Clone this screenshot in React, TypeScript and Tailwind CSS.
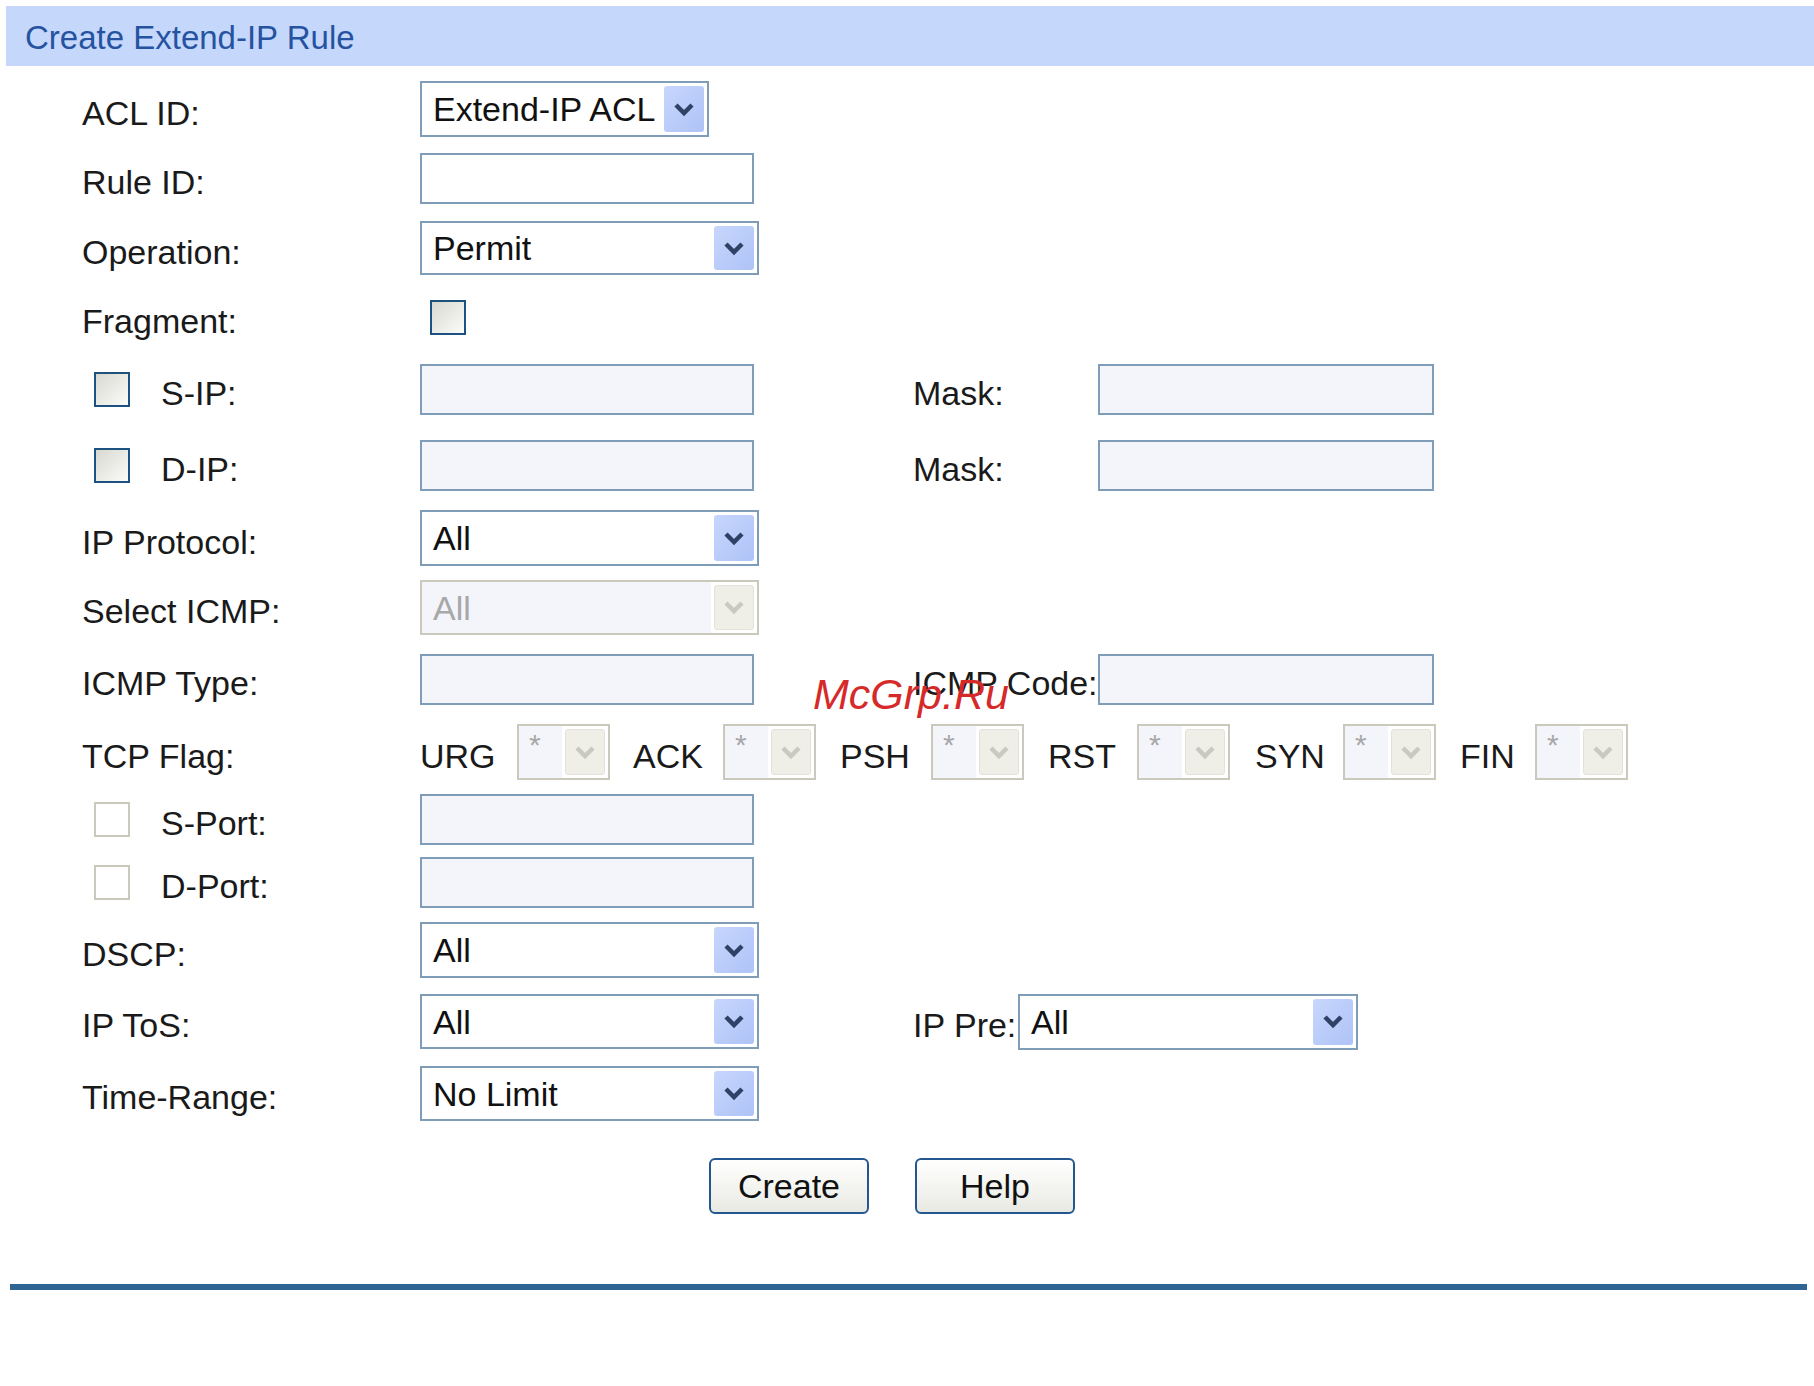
import React from "react";

const Chevron = ({ color }: { color: string }) => (
  <svg width="22" height="15" viewBox="0 0 22 15">
    <polyline points="3,3 11,11 19,3" fill="none" stroke={color} strokeWidth="4.5" strokeLinecap="butt" strokeLinejoin="miter" />
  </svg>
);

function Select({ w, h, value, disabled }: { w: string; h: string; value: string; disabled?: boolean }) {
  return (
    <div
      className={`${w} ${h} flex items-stretch border-2 ${
        disabled ? "border-[#cbc9bc] bg-[#f4f5fb]" : "border-[#7f9db9] bg-white"
      }`}
    >
      <div
        className={`flex-1 flex items-center pl-[11px] text-[34px] leading-none ${
          disabled ? "text-[#a8a8a8]" : "text-[#111111]"
        }`}
      >
        {value}
      </div>
      {disabled ? (
        <div className="flex p-[3px] pl-[3px] bg-white">
          <div className="w-[40px] rounded-[3px] bg-[#efeee7] border border-[#e4e2d8] flex items-center justify-center">
            <Chevron color="#c9c9c1" />
          </div>
        </div>
      ) : (
        <div className="flex p-[3px]">
          <div className="w-[40px] rounded-[3px] bg-gradient-to-br from-[#c7d6fc] to-[#aec3f7] flex items-center justify-center">
            <Chevron color="#2f4265" />
          </div>
        </div>
      )}
    </div>
  );
}

function Input({ w, h, light }: { w: string; h: string; light?: boolean }) {
  return <div className={`${w} ${h} border-2 border-[#7f9db9] ${light ? "bg-[#f3f5fb]" : "bg-white"}`} />;
}

function Checkbox({ disabled }: { disabled?: boolean }) {
  return disabled ? (
    <div className="w-[36px] h-[35px] border-2 border-[#cbc9bc] bg-white" />
  ) : (
    <div className="w-[36px] h-[35px] border-2 border-[#1c5180] bg-gradient-to-br from-[#d9d9d2] to-[#fbfbf9]" />
  );
}

function Label({ children }: { children: React.ReactNode }) {
  return <div className="w-[420px] pl-[82px] pt-[7px] text-[34px] leading-none text-[#1a1a1a]">{children}</div>;
}

function CbLabel({ children, disabled }: { children: React.ReactNode; disabled?: boolean }) {
  return (
    <div className="w-[420px] pl-[94px] flex items-center">
      <Checkbox disabled={disabled} />
      <span className="ml-[31px] pt-[7px] text-[34px] leading-none text-[#1a1a1a]">{children}</span>
    </div>
  );
}

function FlagSel() {
  return (
    <div className="w-[93px] h-[56px] border-2 border-[#cbc9bc] flex items-stretch bg-white">
      <div className="w-[43px] bg-[#f4f5fb] pl-[10px] pt-[4px] text-[30px] leading-none text-[#a8a8a8]">*</div>
      <div className="flex-1 flex p-[3px]">
        <div className="flex-1 rounded-[3px] bg-[#efeee7] border border-[#e4e2d8] flex items-center justify-center">
          <Chevron color="#c9c9c1" />
        </div>
      </div>
    </div>
  );
}

function Flag({ name, lw }: { name: string; lw: string }) {
  return (
    <div className="flex items-center">
      <span className={`${lw} pt-[7px] text-[34px] leading-none text-[#1a1a1a]`}>{name}</span>
      <FlagSel />
    </div>
  );
}

const SecondLabel = ({ children, w }: { children: React.ReactNode; w: string }) => (
  <div className={`${w} pt-[7px] text-[34px] leading-none text-[#1a1a1a]`}>{children}</div>
);

export default function App() {
  return (
    <div className="relative w-[1814px] h-[1386px] bg-white overflow-hidden font-['Liberation_Sans',Arial,sans-serif]">
      <div className="ml-[6px] mt-[6px] h-[60px] bg-[#c5d8fc] flex items-center pl-[19px] pt-[2px] text-[33px] leading-none text-[#2553a0]">
        Create Extend-IP Rule
      </div>

      <div className="mt-[8px] flex flex-col">
        <div className="h-[70px] flex items-center">
          <Label>ACL ID:</Label>
          <Select w="w-[289px]" h="h-[56px]" value="Extend-IP ACL" />
        </div>
        <div className="h-[69px] flex items-center">
          <Label>Rule ID:</Label>
          <Input w="w-[334px]" h="h-[51px]" />
        </div>
        <div className="h-[70px] flex items-center">
          <Label>Operation:</Label>
          <Select w="w-[339px]" h="h-[54px]" value="Permit" />
        </div>
        <div className="h-[69px] flex items-center">
          <Label>Fragment:</Label>
          <div className="ml-[10px]">
            <Checkbox />
          </div>
        </div>
        <div className="h-[75px] flex items-center">
          <CbLabel>S-IP:</CbLabel>
          <div className="w-[493px]">
            <Input w="w-[334px]" h="h-[51px]" light />
          </div>
          <SecondLabel w="w-[185px]">Mask:</SecondLabel>
          <Input w="w-[336px]" h="h-[51px]" light />
        </div>
        <div className="h-[77px] flex items-center">
          <CbLabel>D-IP:</CbLabel>
          <div className="w-[493px]">
            <Input w="w-[334px]" h="h-[51px]" light />
          </div>
          <SecondLabel w="w-[185px]">Mask:</SecondLabel>
          <Input w="w-[336px]" h="h-[51px]" light />
        </div>
        <div className="h-[68px] flex items-center">
          <Label>IP Protocol:</Label>
          <Select w="w-[339px]" h="h-[56px]" value="All" />
        </div>
        <div className="h-[71px] flex items-center">
          <Label>Select ICMP:</Label>
          <Select w="w-[339px]" h="h-[55px]" value="All" disabled />
        </div>
        <div className="h-[73px] flex items-center">
          <Label>ICMP Type:</Label>
          <div className="w-[493px]">
            <Input w="w-[334px]" h="h-[51px]" light />
          </div>
          <SecondLabel w="w-[185px]">ICMP Code:</SecondLabel>
          <Input w="w-[336px]" h="h-[51px]" light />
        </div>
        <div className="h-[72px] flex items-center">
          <Label>TCP Flag:</Label>
          <div className="flex items-center">
            <Flag name="URG" lw="w-[97px]" />
            <div className="w-[23px]" />
            <Flag name="ACK" lw="w-[90px]" />
            <div className="w-[24px]" />
            <Flag name="PSH" lw="w-[91px]" />
            <div className="w-[24px]" />
            <Flag name="RST" lw="w-[89px]" />
            <div className="w-[25px]" />
            <Flag name="SYN" lw="w-[88px]" />
            <div className="w-[24px]" />
            <Flag name="FIN" lw="w-[75px]" />
          </div>
        </div>
        <div className="h-[63px] flex items-center">
          <CbLabel disabled>S-Port:</CbLabel>
          <Input w="w-[334px]" h="h-[51px]" light />
        </div>
        <div className="h-[63px] flex items-center">
          <CbLabel disabled>D-Port:</CbLabel>
          <Input w="w-[334px]" h="h-[51px]" light />
        </div>
        <div className="h-[72px] flex items-center">
          <Label>DSCP:</Label>
          <Select w="w-[339px]" h="h-[56px]" value="All" />
        </div>
        <div className="h-[71px] flex items-center">
          <Label>IP ToS:</Label>
          <div className="w-[493px]">
            <Select w="w-[339px]" h="h-[55px]" value="All" />
          </div>
          <SecondLabel w="w-[105px]">IP Pre:</SecondLabel>
          <Select w="w-[340px]" h="h-[56px]" value="All" />
        </div>
        <div className="h-[73px] flex items-center">
          <Label>Time-Range:</Label>
          <Select w="w-[339px]" h="h-[55px]" value="No Limit" />
        </div>

        <div className="mt-[28px] flex pl-[709px]">
          <button className="w-[160px] h-[56px] border-2 border-[#24578f] rounded-[6px] bg-gradient-to-b from-white to-[#e9e9e3] text-[34px] leading-none text-[#111111]">
            Create
          </button>
          <button className="ml-[46px] w-[160px] h-[56px] border-2 border-[#24578f] rounded-[6px] bg-gradient-to-b from-white to-[#e9e9e3] text-[34px] leading-none text-[#111111]">
            Help
          </button>
        </div>

        <div className="mt-[70px] ml-[10px] w-[1797px] h-[6px] bg-[#2f6593]" />
      </div>

      <div className="absolute left-[813px] top-[673px] text-[43px] leading-none italic text-[#d62a2a]">McGrp.Ru</div>
    </div>
  );
}
